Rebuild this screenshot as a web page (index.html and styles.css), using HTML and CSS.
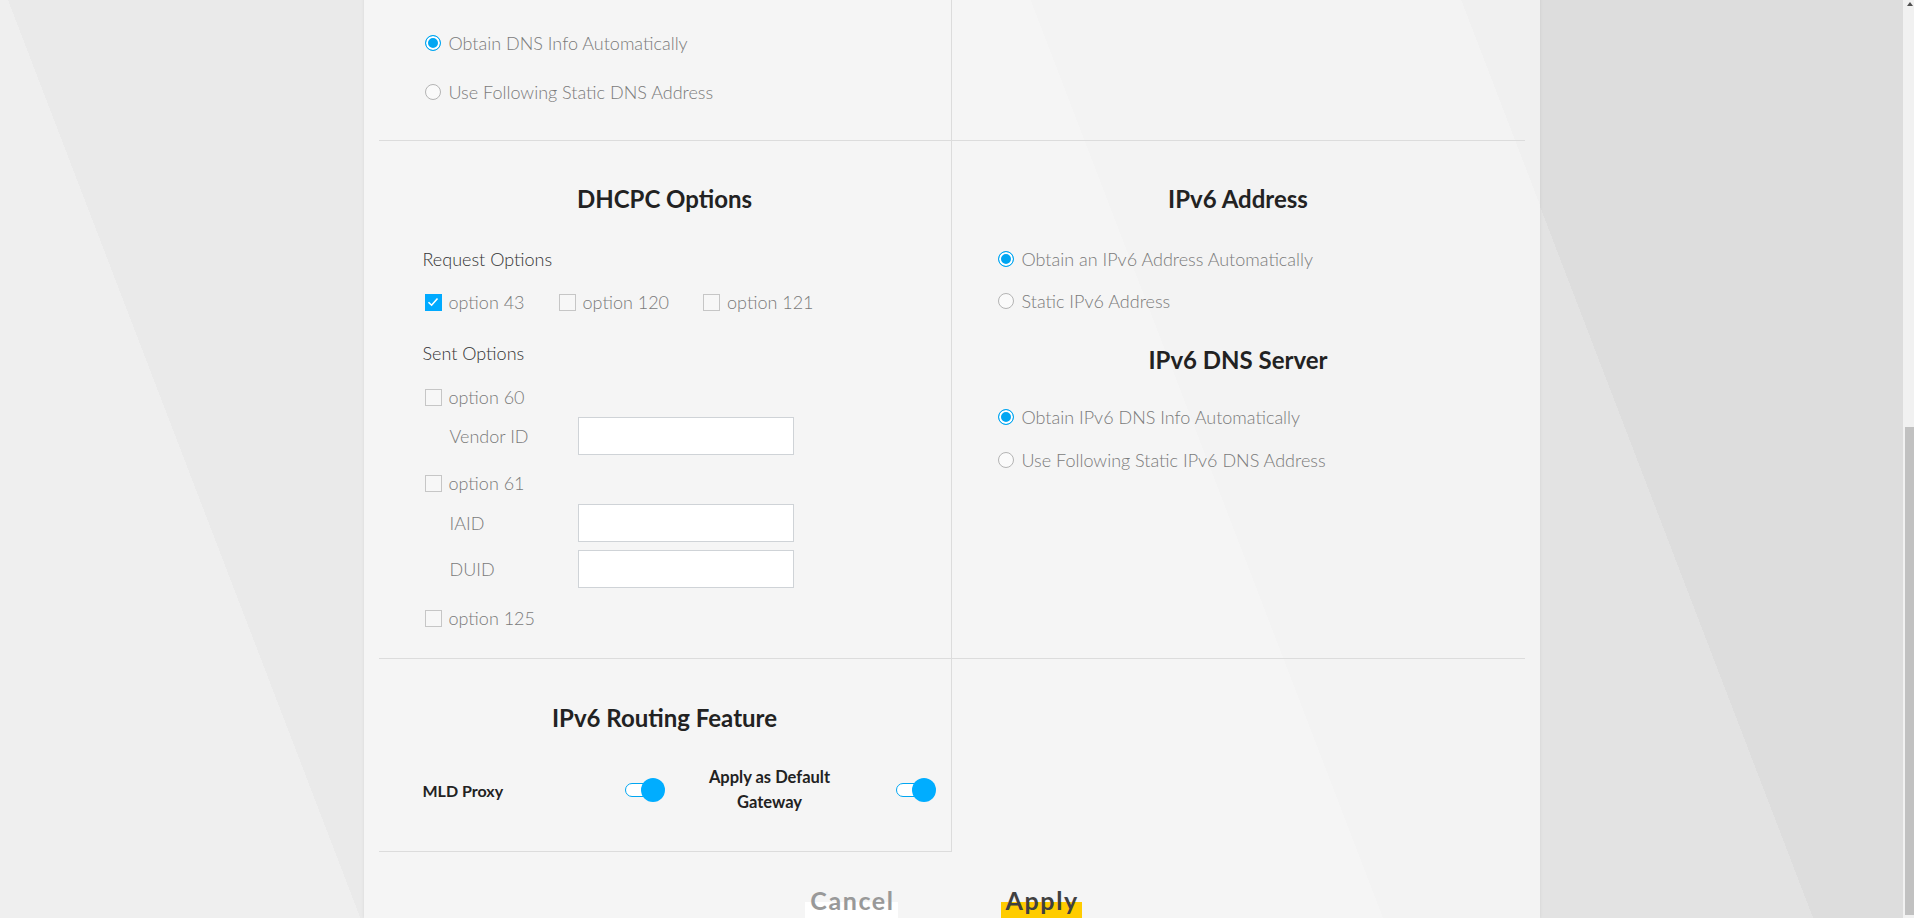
FILE: index.html
```html
<!DOCTYPE html>
<html lang="en">
<head>
    <meta charset="UTF-8">
    <meta name="viewport" content="width=device-width, initial-scale=1.0">
    <title>Internet Connection</title>
    <link rel="stylesheet" href="styles.css">
</head>
<body>
    <div class="page">
        <main class="viewport">
            <form class="panel">
                <div class="grid">
                    <!-- IPv4 DNS -->
                    <div class="cell cell-left cell-dns">
                        <div class="choice"><span class="radio on"></span>Obtain DNS Info Automatically</div>
                        <div class="choice mt-25"><span class="radio"></span>Use Following Static DNS Address</div>
                    </div>
                    <div class="cell cell-dns"></div>

                    <!-- DHCPC options -->
                    <div class="cell cell-left cell-main">
                        <h3>DHCPC Options</h3>
                        <div class="group-title mt-33">Request Options</div>
                        <div class="check-row mt-19">
                            <div class="choice">
                                <span class="check on">
                                    <svg width="12" height="10" viewBox="0 0 12 10"><polyline points="1.5,5.2 4.6,8.2 10.5,1.5" fill="none" stroke="#fff" stroke-width="1.6"/></svg>
                                </span>option 43
                            </div>
                            <div class="choice"><span class="check"></span>option 120</div>
                            <div class="choice"><span class="check"></span>option 121</div>
                        </div>
                        <div class="group-title mt-27">Sent Options</div>
                        <div class="choice mt-20"><span class="check"></span>option 60</div>
                        <div class="field mt-8"><span>Vendor ID</span><input type="text"></div>
                        <div class="choice mt-16"><span class="check"></span>option 61</div>
                        <div class="field mt-9"><span>IAID</span><input type="text"></div>
                        <div class="field mt-8"><span>DUID</span><input type="text"></div>
                        <div class="choice mt-18"><span class="check"></span>option 125</div>
                    </div>

                    <!-- IPv6 address / DNS -->
                    <div class="cell cell-main">
                        <h3>IPv6 Address</h3>
                        <div class="choice mt-33"><span class="radio on"></span>Obtain an IPv6 Address Automatically</div>
                        <div class="choice mt-18"><span class="radio"></span>Static IPv6 Address</div>
                        <h3 class="mt-32">IPv6 DNS Server</h3>
                        <div class="choice mt-30"><span class="radio on"></span>Obtain IPv6 DNS Info Automatically</div>
                        <div class="choice mt-19"><span class="radio"></span>Use Following Static IPv6 DNS Address</div>
                    </div>

                    <!-- routing -->
                    <div class="cell cell-left cell-routing">
                        <h3>IPv6 Routing Feature</h3>
                        <div class="switch-row mt-32">
                            <span class="switch-label">MLD Proxy</span>
                            <span class="switch"></span>
                            <span class="switch-label centered">Apply as Default Gateway</span>
                            <span class="switch"></span>
                        </div>
                    </div>
                    <div class="cell-blank"></div>
                </div>

                <div class="actions">
                    <button type="button" class="btn btn-cancel">Cancel</button>
                    <button type="button" class="btn btn-apply">Apply</button>
                </div>
            </form>
        </main>
        <div class="scrollbar">
            <span class="scroll-arrow"></span>
            <span class="scroll-thumb"></span>
        </div>
    </div>
</body>
</html>
```

FILE: styles.css
```css
body {
    margin: 0;
    font-family: Lato, "Liberation Sans", sans-serif;
    color: #7a7a7a;
}

.page {
    display: flex;
    height: 918px;
    overflow: hidden;
    background: linear-gradient(69deg, #efefef 0 15.9%, #eaeaea 15.9% 50%, #e3e3e3 50% 80%, #dddddd 80%) fixed;
}

.viewport {
    flex: 1;
    display: flex;
    flex-direction: column;
    justify-content: flex-end;
    align-items: center;
    overflow: hidden;
}

.panel {
    flex-shrink: 0;
    width: 1176px;
    box-sizing: border-box;
    padding: 0 15px;
    margin: 0;
    background: linear-gradient(69deg, #f5f5f5 0 61%, #f3f3f3 61% 80%, #f0f0f0 80%) fixed;
    box-shadow: 0 0 3px rgba(0,0,0,0.08);
}

.grid {
    display: grid;
    grid-template-columns: 1fr 1fr;
}

.cell {
    border-bottom: 1px solid #dcdcdc;
}

.cell-left {
    border-right: 1px solid #dcdcdc;
}

.cell > * {
    margin-left: 44px;
}

.cell > h3 {
    margin-left: 0;
    margin-right: 0;
}

.cell-dns {
    padding: 60px 0 36px;
}

.cell-main {
    padding: 43px 0 28px;
}

.cell-routing {
    padding: 44px 0 36px;
}

h3 {
    margin: 0;
    font-size: 24px;
    line-height: 30px;
    font-weight: 700;
    color: #222;
    text-align: center;
}

.mt-8 { margin-top: 8px; }
.mt-9 { margin-top: 9px; }
.mt-16 { margin-top: 16px; }
.mt-18 { margin-top: 18px; }
.mt-19 { margin-top: 19px; }
.mt-20 { margin-top: 20px; }
.mt-25 { margin-top: 25px; }
.mt-27 { margin-top: 27px; }
.mt-30 { margin-top: 30px; }
.mt-32 { margin-top: 32px; }
.mt-33 { margin-top: 33px; }

.choice {
    display: flex;
    align-items: center;
    height: 24px;
    font-size: 18px;
    font-weight: 300;
    color: #7a7a7a;
    white-space: nowrap;
}

.group-title {
    height: 24px;
    line-height: 24px;
    font-size: 18px;
    font-weight: 300;
    color: #333;
}

.radio {
    flex-shrink: 0;
    width: 16px;
    height: 16px;
    box-sizing: border-box;
    margin: 0 8px 0 2px;
    border: 1px solid #b4b4b4;
    border-radius: 50%;
    background: #fafafa;
}

.radio.on {
    border: 1.5px solid #00a6f2;
    background: #00a6f2;
    box-shadow: inset 0 0 0 2px #fff;
}

.check {
    flex-shrink: 0;
    display: flex;
    align-items: center;
    justify-content: center;
    width: 17px;
    height: 17px;
    box-sizing: border-box;
    margin: 0 7px 0 2px;
    border: 1px solid #c6c6c6;
    background: #f7f7f7;
}

.check.on {
    border-color: #00aaff;
    background: #00aaff;
}

.check-row {
    display: flex;
    gap: 32px;
}

.field {
    display: flex;
    align-items: center;
    padding-left: 27px;
    font-size: 18px;
    font-weight: 300;
    color: #7a7a7a;
}

.field span {
    width: 128px;
}

.field input {
    width: 216px;
    height: 38px;
    box-sizing: border-box;
    border: 1px solid #cfd3d7;
    background: #fff;
    outline: none;
}

.switch-row {
    display: flex;
    align-items: center;
    height: 50px;
}

.switch-label {
    width: 202px;
    font-size: 16px;
    font-weight: 700;
    color: #222;
}

.switch-label.centered {
    width: 160px;
    margin: 0 46px 0 25px;
    font-size: 16.5px;
    line-height: 25px;
    text-align: center;
}

.switch {
    position: relative;
    flex-shrink: 0;
    width: 40px;
    height: 24px;
}

.switch::before {
    content: "";
    position: absolute;
    left: 0;
    top: 5px;
    width: 30px;
    height: 14px;
    box-sizing: border-box;
    border: 1.5px solid #00a6f2;
    border-radius: 7px;
    background: #fff;
}

.switch::after {
    content: "";
    position: absolute;
    right: 0;
    top: 0;
    width: 24px;
    height: 24px;
    border-radius: 50%;
    background: #00adff;
}

.actions {
    display: flex;
    justify-content: center;
    gap: 103px;
    padding: 30px 16px 0 0;
}

.btn {
    height: 36px;
    padding: 0 3px 0 5px;
    border: 0;
    font-family: inherit;
    font-size: 25px;
    font-weight: 700;
    line-height: 36px;
    letter-spacing: 1.6px;
    cursor: pointer;
}

.btn-cancel {
    color: #999;
    background: linear-gradient(transparent 20px, #fff 20px);
}

.btn-apply {
    color: #404040;
    background: linear-gradient(transparent 20px, #ffcc00 20px);
}

.scrollbar {
    display: flex;
    flex-direction: column;
    width: 11px;
    flex-shrink: 0;
    background: #f1f1f1;
}

.scroll-arrow {
    width: 0;
    height: 0;
    margin: 2px 0 0 4px;
    border-left: 3.5px solid transparent;
    border-right: 3.5px solid transparent;
    border-bottom: 4px solid #505050;
}

.scroll-thumb {
    height: 488px;
    margin: auto 0 3px 2px;
    background: #c1c1c1;
}
```
